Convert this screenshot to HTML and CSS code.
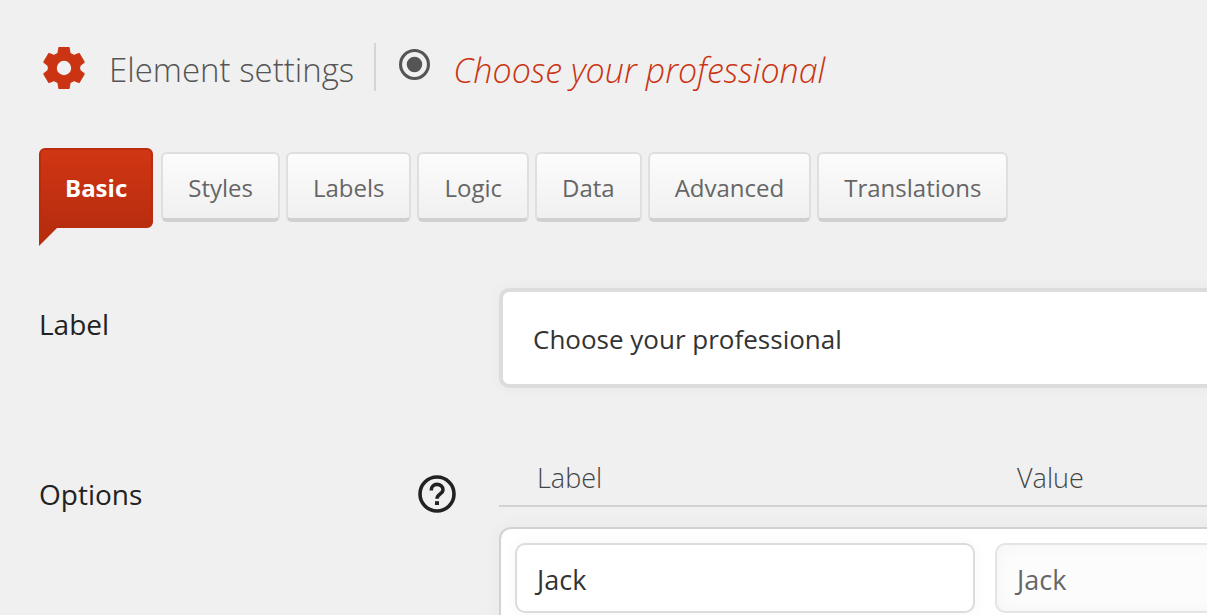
FILE: index.html
```html
<!DOCTYPE html>
<html lang="en">
<head>
<meta charset="utf-8">
<title>Element settings</title>
<link rel="stylesheet" href="styles.css">
</head>
<body>
<main class="panel">
  <header class="head">
    <svg class="gear" viewBox="-21 -21 42 42" aria-hidden="true">
      <circle r="11.5" fill="none" stroke="currentColor" stroke-width="8.6"/>
      <g fill="currentColor">
        <path id="tooth" d="M-5 -21H5Q5.600 -21 5.700 -20.300L6.400 -15.500L9 -13L4 -9H-4L-9 -13L-6.400 -15.500L-5.700 -20.300Q-5.600 -21 -5 -21Z"/>
        <use href="#tooth" transform="rotate(60)"/>
        <use href="#tooth" transform="rotate(120)"/>
        <use href="#tooth" transform="rotate(180)"/>
        <use href="#tooth" transform="rotate(240)"/>
        <use href="#tooth" transform="rotate(300)"/>
      </g>
    </svg>
    <h1 class="title">Element settings</h1>
    <div class="element">
      <svg class="dot" viewBox="0 0 30 30" aria-hidden="true">
        <circle cx="15" cy="15" r="13.500" fill="none" stroke="currentColor" stroke-width="3"/>
        <circle cx="15" cy="15" r="7.500" fill="currentColor"/>
      </svg>
      <em class="name">Choose your professional</em>
    </div>
  </header>

  <nav class="tabs">
    <button type="button" class="tab active">Basic</button>
    <button type="button" class="tab">Styles</button>
    <button type="button" class="tab">Labels</button>
    <button type="button" class="tab">Logic</button>
    <button type="button" class="tab">Data</button>
    <button type="button" class="tab">Advanced</button>
    <button type="button" class="tab">Translations</button>
  </nav>

  <form class="form">
    <div class="row">
      <label class="caption" for="label">Label</label>
      <input class="input large" id="label" type="text" value="Choose your professional">
    </div>
    <div class="row">
      <div class="caption options">
        <span>Options</span>
        <button type="button" class="help" aria-label="Help">
          <svg viewBox="0 0 38 38" aria-hidden="true">
            <circle cx="19" cy="19" r="17" fill="none" stroke="currentColor" stroke-width="3.600"/>
            <path d="M13.200 15.400C13.200 11.600 15.800 9.400 19 9.400S25 11.700 25 14.900C25 18.800 19 19 19 23.800" fill="none" stroke="currentColor" stroke-width="3.600"/>
            <path d="M17 26.200h4v3.800h-4z" fill="currentColor"/>
          </svg>
        </button>
      </div>
      <div>
        <div class="columns">
          <span id="col-label">Label</span>
          <span id="col-value">Value</span>
        </div>
        <div class="list">
          <input class="input" type="text" value="Jack" aria-labelledby="col-label">
          <input class="input muted" type="text" value="Jack" aria-labelledby="col-value">
        </div>
      </div>
    </div>
  </form>
</main>
</body>
</html>
```
FILE: styles.css
```css
* {
  box-sizing: border-box;
}

body {
  margin: 0;
  background: #f0f0f0;
  color: #222;
  font-family: "Segoe UI", "Open Sans", "Noto Sans", sans-serif;
  font-size: 27px;
  line-height: 36px;
  overflow: hidden;
}

.panel {
  min-width: 1520px;
  padding: 43px 39px 0;
}

.head {
  display: flex;
  align-items: center;
  height: 48px;
}

.gear {
  width: 42px;
  height: 42px;
  margin: 2px 4px 0;
  color: #ca3412;
}

.title {
  margin: 6px 20px 0;
  color: #555;
  font-size: 33px;
  font-weight: 300;
  line-height: 48px;
}

.element {
  display: flex;
  align-items: center;
  height: 48px;
  padding-left: 23px;
  border-left: 2px solid #d5d5d5;
}

.dot {
  width: 31px;
  height: 31px;
  margin-bottom: 6px;
  color: #555;
}

.name {
  margin: 6px 0 0 23px;
  color: #ca3412;
  font-size: 34px;
  font-weight: 300;
  line-height: 48px;
}

.tabs {
  display: flex;
  align-items: flex-start;
  gap: 6px;
  margin-top: 57px;
}

.tab {
  height: 70px;
  margin-top: 4px;
  padding: 4px 25px 0;
  border: 2px solid #dfdfdf;
  border-bottom: 4px solid #d0d0d0;
  border-radius: 6px;
  background: linear-gradient(#fcfcfc, #f0f0f0);
  color: #666;
  font: inherit;
  font-size: 24px;
}

.tab.active {
  position: relative;
  height: 80px;
  margin: 0 2px 0 0;
  padding: 0 24px;
  border: 2px solid #b92c0e;
  border-radius: 6px 6px 6px 0;
  background: linear-gradient(#d03613, #b92d0f);
  color: #fff;
  font-weight: 700;
}

.tab.active::after {
  content: "";
  position: absolute;
  top: 100%;
  left: -2px;
  width: 20px;
  height: 20px;
  background: #b92d0f;
  clip-path: polygon(0 0, 100% 0, 0 100%);
}

.form {
  display: grid;
  gap: 72px;
  margin-top: 60px;
}

.row {
  display: grid;
  grid-template-columns: 460px 1fr;
  align-items: start;
}

.caption {
  padding-top: 18px;
  font-size: 28px;
}

.options {
  display: flex;
  align-items: center;
  justify-content: space-between;
  padding: 15px 43px 0 0;
}

.help {
  width: 38px;
  height: 38px;
  padding: 0;
  border: 0;
  background: none;
  color: #222;
}

.help svg {
  display: block;
}

.input {
  width: 100%;
  height: 70px;
  padding: 2px 14px 0;
  border: 2px solid #dcdcdc;
  border-radius: 10px;
  background: #fff;
  color: #333;
  font: inherit;
  text-indent: 6px;
  box-shadow: 0 0 16px rgba(0, 0, 0, 0.04);
}

.input.large {
  height: 100px;
  padding: 2px 24px 0;
  border-width: 4px;
  font-size: 26px;
}

.input.muted {
  border-color: #e4e4e4;
  background: #fcfcfc;
  color: #666;
  box-shadow: inset 0 0 16px rgba(0, 0, 0, 0.04);
}

.columns,
.list {
  display: grid;
  grid-template-columns: 460px 460px;
  gap: 20px;
}

.columns {
  height: 47px;
  padding-left: 38px;
  border-bottom: 2px solid #d2d2d2;
  color: #444;
  font-weight: 300;
}

.list {
  margin-top: 20px;
  padding: 14px;
  border: 2px solid #d2d2d2;
  border-radius: 12px;
  background: #fff;
  box-shadow: 0 0 20px rgba(0, 0, 0, 0.04);
}
```
